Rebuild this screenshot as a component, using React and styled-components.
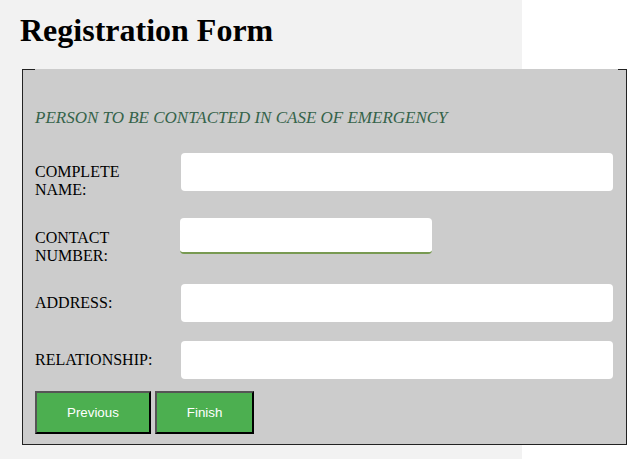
import React from "react";
import styled, { createGlobalStyle } from "styled-components";

const GlobalStyle = createGlobalStyle`
    body {
        margin: 0;
        background: #ffffff;
        font-family: "Liberation Serif", "Times New Roman", serif;
    }
`;

const Page = styled.div`
    width: 482px;
    min-height: 100vh;
    padding: 12px 20px 0;
    background-color: #f2f2f2;
`;

const Title = styled.h1`
    margin: 0 0 20px;
    font-size: 32px;
    font-weight: bold;
    color: #000;
`;

const FormBox = styled.fieldset`
    box-sizing: border-box;
    width: 605px;
    margin: 0 2px;
    padding: 0 8px 10px 12px;
    border: 1px solid #222;
    background-color: #cccccc;
`;

const Gap = styled.legend`
    width: 100%;
    height: 0;
    padding: 0;
`;

const SectionTitle = styled.p`
    margin: 38px 0 25px;
    font-size: 17px;
    font-style: italic;
    color: #35634a;
`;

const Row = styled.div`
    display: flex;
    align-items: baseline;
    margin-bottom: ${({ $last }) => ($last ? "12px" : "19px")};
`;

const Label = styled.label`
    width: 130px;
    flex-shrink: 0;
    margin-right: 16px;
    font-size: 16px;
    color: #000;
`;

const Input = styled.input`
    box-sizing: border-box;
    width: ${({ $narrow }) => ($narrow ? "252px" : "432px")};
    height: ${({ $narrow }) => ($narrow ? "36px" : "38px")};
    margin-left: ${({ $narrow }) => ($narrow ? "-1px" : "0")};
    padding: ${({ $narrow }) => ($narrow ? "5px 8px 0" : "0 8px")};
    border: none;
    border-bottom: ${({ $narrow }) => ($narrow ? "2px solid #789a52" : "none")};
    border-radius: 4px;
    background: #fff;
    font-family: "Liberation Sans", Arial, sans-serif;
    font-size: 16px;
    outline: none;
`;

const Buttons = styled.div`
    display: flex;
    gap: 4px;
`;

const Button = styled.button`
    padding: 12px 30px;
    border: 2px solid;
    border-color: #555 #000 #000 #555;
    background-color: #4caf50;
    color: #fff;
    font-family: "Liberation Sans", Arial, sans-serif;
    font-size: 13.33px;
    cursor: pointer;
`;

const fields = [
    { label: "COMPLETE NAME:" },
    { label: "CONTACT NUMBER:", narrow: true, type: "tel" },
    { label: "ADDRESS:" },
    { label: "RELATIONSHIP:" },
];

const App = () => {
    return (
        <Page>
            <GlobalStyle />
            <Title>Registration Form</Title>
            <form onSubmit={(e) => e.preventDefault()}>
                <FormBox>
                    <Gap />
                    <SectionTitle>PERSON TO BE CONTACTED IN CASE OF EMERGENCY</SectionTitle>
                    {fields.map((f, i) => (
                        <Row key={f.label} $last={i === fields.length - 1}>
                            <Label>{f.label}</Label>
                            <Input type={f.type || "text"} $narrow={f.narrow} />
                        </Row>
                    ))}
                    <Buttons>
                        <Button type="button">Previous</Button>
                        <Button type="submit">Finish</Button>
                    </Buttons>
                </FormBox>
            </form>
        </Page>
    );
};

export default App;
